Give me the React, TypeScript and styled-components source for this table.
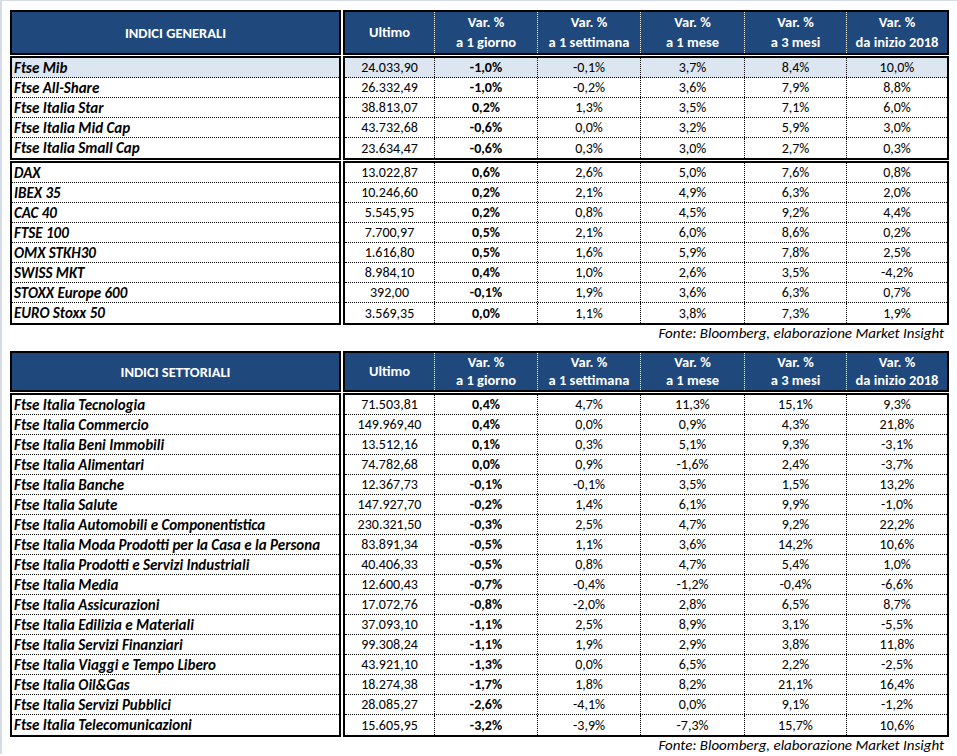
import styled, { createGlobalStyle } from "styled-components";

const GlobalStyle = createGlobalStyle`
  body {
    margin: 0;
    background: #ffffff;
    font-family: Carlito, Calibri, Lato, "Liberation Sans", sans-serif;
    color: #000000;
  }
`;

type Row = {
  name: string;
  values: string[];
  highlight?: boolean;
};

const generali1: Row[] = [
  { name: "Ftse Mib", values: ["24.033,90", "-1,0%", "-0,1%", "3,7%", "8,4%", "10,0%"], highlight: true },
  { name: "Ftse All-Share", values: ["26.332,49", "-1,0%", "-0,2%", "3,6%", "7,9%", "8,8%"] },
  { name: "Ftse Italia Star", values: ["38.813,07", "0,2%", "1,3%", "3,5%", "7,1%", "6,0%"] },
  { name: "Ftse Italia Mid Cap", values: ["43.732,68", "-0,6%", "0,0%", "3,2%", "5,9%", "3,0%"] },
  { name: "Ftse Italia Small Cap", values: ["23.634,47", "-0,6%", "0,3%", "3,0%", "2,7%", "0,3%"] },
];

const generali2: Row[] = [
  { name: "DAX", values: ["13.022,87", "0,6%", "2,6%", "5,0%", "7,6%", "0,8%"] },
  { name: "IBEX 35", values: ["10.246,60", "0,2%", "2,1%", "4,9%", "6,3%", "2,0%"] },
  { name: "CAC 40", values: ["5.545,95", "0,2%", "0,8%", "4,5%", "9,2%", "4,4%"] },
  { name: "FTSE 100", values: ["7.700,97", "0,5%", "2,1%", "6,0%", "8,6%", "0,2%"] },
  { name: "OMX STKH30", values: ["1.616,80", "0,5%", "1,6%", "5,9%", "7,8%", "2,5%"] },
  { name: "SWISS MKT", values: ["8.984,10", "0,4%", "1,0%", "2,6%", "3,5%", "-4,2%"] },
  { name: "STOXX Europe 600", values: ["392,00", "-0,1%", "1,9%", "3,6%", "6,3%", "0,7%"] },
  { name: "EURO Stoxx 50", values: ["3.569,35", "0,0%", "1,1%", "3,8%", "7,3%", "1,9%"] },
];

const settoriali: Row[] = [
  { name: "Ftse Italia Tecnologia", values: ["71.503,81", "0,4%", "4,7%", "11,3%", "15,1%", "9,3%"] },
  { name: "Ftse Italia Commercio", values: ["149.969,40", "0,4%", "0,0%", "0,9%", "4,3%", "21,8%"] },
  { name: "Ftse Italia Beni Immobili", values: ["13.512,16", "0,1%", "0,3%", "5,1%", "9,3%", "-3,1%"] },
  { name: "Ftse Italia Alimentari", values: ["74.782,68", "0,0%", "0,9%", "-1,6%", "2,4%", "-3,7%"] },
  { name: "Ftse Italia Banche", values: ["12.367,73", "-0,1%", "-0,1%", "3,5%", "1,5%", "13,2%"] },
  { name: "Ftse Italia Salute", values: ["147.927,70", "-0,2%", "1,4%", "6,1%", "9,9%", "-1,0%"] },
  { name: "Ftse Italia Automobili e Componentistica", values: ["230.321,50", "-0,3%", "2,5%", "4,7%", "9,2%", "22,2%"] },
  { name: "Ftse Italia Moda Prodotti per la Casa e la Persona", values: ["83.891,34", "-0,5%", "1,1%", "3,6%", "14,2%", "10,6%"] },
  { name: "Ftse Italia Prodotti e Servizi Industriali", values: ["40.406,33", "-0,5%", "0,8%", "4,7%", "5,4%", "1,0%"] },
  { name: "Ftse Italia Media", values: ["12.600,43", "-0,7%", "-0,4%", "-1,2%", "-0,4%", "-6,6%"] },
  { name: "Ftse Italia Assicurazioni", values: ["17.072,76", "-0,8%", "-2,0%", "2,8%", "6,5%", "8,7%"] },
  { name: "Ftse Italia Edilizia e Materiali", values: ["37.093,10", "-1,1%", "2,5%", "8,9%", "3,1%", "-5,5%"] },
  { name: "Ftse Italia Servizi Finanziari", values: ["99.308,24", "-1,1%", "1,9%", "2,9%", "3,8%", "11,8%"] },
  { name: "Ftse Italia Viaggi e Tempo Libero", values: ["43.921,10", "-1,3%", "0,0%", "6,5%", "2,2%", "-2,5%"] },
  { name: "Ftse Italia Oil&Gas", values: ["18.274,38", "-1,7%", "1,8%", "8,2%", "21,1%", "16,4%"] },
  { name: "Ftse Italia Servizi Pubblici", values: ["28.085,27", "-2,6%", "-4,1%", "0,0%", "9,1%", "-1,2%"] },
  { name: "Ftse Italia Telecomunicazioni", values: ["15.605,95", "-3,2%", "-3,9%", "-7,3%", "15,7%", "10,6%"] },
];

const columns: [string, string][] = [
  ["Ultimo", ""],
  ["Var. %", "a 1 giorno"],
  ["Var. %", "a 1 settimana"],
  ["Var. %", "a 1 mese"],
  ["Var. %", "a 3 mesi"],
  ["Var. %", "da inizio 2018"],
];

const Page = styled.div`
  border-top: 1px solid #d5dce6;
  border-left: 2px solid #d5dce6;
  padding: 9px 0 0 8px;
  min-height: 746px;
  box-sizing: border-box;
`;

const Table = styled.div`
  display: grid;
  grid-template-columns: 331px 606px;
  column-gap: 2px;
  row-gap: 1px;
  width: 939px;
`;

const Box = styled.div<{ $head?: boolean }>`
  border: 2px solid #000000;
  background: ${(p) => (p.$head ? "#1f497d" : "#ffffff")};
  box-sizing: border-box;
`;

const HeadTitle = styled.div<{ $h: number }>`
  height: ${(p) => p.$h}px;
  display: flex;
  align-items: center;
  justify-content: center;
  color: #ffffff;
  font-weight: 700;
  font-size: 14.5px;
`;

const HeadGrid = styled.div<{ $h: number }>`
  display: grid;
  grid-template-columns: 90px 103px 103px 104px 102px 1fr;
  height: ${(p) => p.$h}px;
`;

const HeadCell = styled.div<{ $single?: boolean }>`
  display: flex;
  flex-direction: column;
  align-items: center;
  justify-content: ${(p) => (p.$single ? "center" : "space-evenly")};
  color: #ffffff;
  font-weight: 700;
  font-size: 14.5px;
  line-height: 17px;
  border-right: 1px dotted #ffffff;

  &:last-child {
    border-right: none;
  }
`;

const NameCell = styled.div<{ $hl?: boolean }>`
  height: 20px;
  box-sizing: border-box;
  display: flex;
  align-items: center;
  padding-left: 2px;
  font-weight: 700;
  font-style: italic;
  font-size: 15px;
  white-space: nowrap;
  background: ${(p) => (p.$hl ? "#dce6f1" : "transparent")};
  border-bottom: 1px dotted #000000;

  &:last-child {
    border-bottom: none;
  }
`;

const DataRow = styled.div<{ $hl?: boolean }>`
  display: grid;
  grid-template-columns: 90px 103px 103px 104px 102px 1fr;
  height: 20px;
  box-sizing: border-box;
  background: ${(p) => (p.$hl ? "#dce6f1" : "transparent")};
  border-bottom: 1px dotted #000000;

  &:last-child {
    border-bottom: none;
  }
`;

const DataCell = styled.div<{ $bold?: boolean }>`
  display: flex;
  align-items: center;
  justify-content: center;
  font-size: 14px;
  font-weight: ${(p) => (p.$bold ? 700 : 400)};
  border-right: 1px dotted #000000;

  &:last-child {
    border-right: none;
  }
`;

const Source = styled.div<{ $mb: number }>`
  width: 939px;
  text-align: right;
  box-sizing: border-box;
  padding-right: 5px;
  height: 17px;
  line-height: 17px;
  font-style: italic;
  font-size: 15px;
  margin-bottom: ${(p) => p.$mb}px;
`;

function Header({ title, height }: { title: string; height: number }) {
  return (
    <>
      <Box $head>
        <HeadTitle $h={height}>{title}</HeadTitle>
      </Box>
      <Box $head>
        <HeadGrid $h={height}>
          {columns.map(([a, b], i) => (
            <HeadCell key={i} $single={!b}>
              <span>{a}</span>
              {b ? <span>{b}</span> : null}
            </HeadCell>
          ))}
        </HeadGrid>
      </Box>
    </>
  );
}

function Group({ rows }: { rows: Row[] }) {
  return (
    <>
      <Box>
        {rows.map((r) => (
          <NameCell key={r.name} $hl={r.highlight}>
            {r.name}
          </NameCell>
        ))}
      </Box>
      <Box>
        {rows.map((r) => (
          <DataRow key={r.name} $hl={r.highlight}>
            {r.values.map((v, i) => (
              <DataCell key={i} $bold={i === 1}>
                {v}
              </DataCell>
            ))}
          </DataRow>
        ))}
      </Box>
    </>
  );
}

export default function App() {
  return (
    <>
      <GlobalStyle />
      <Page>
        <Table>
          <Header title="INDICI GENERALI" height={41} />
          <Group rows={generali1} />
          <Group rows={generali2} />
        </Table>
        <Source $mb={9}>Fonte: Bloomberg, elaborazione Market Insight</Source>
        <Table>
          <Header title="INDICI SETTORIALI" height={37} />
          <Group rows={settoriali} />
        </Table>
        <Source $mb={0}>Fonte: Bloomberg, elaborazione Market Insight</Source>
      </Page>
    </>
  );
}
